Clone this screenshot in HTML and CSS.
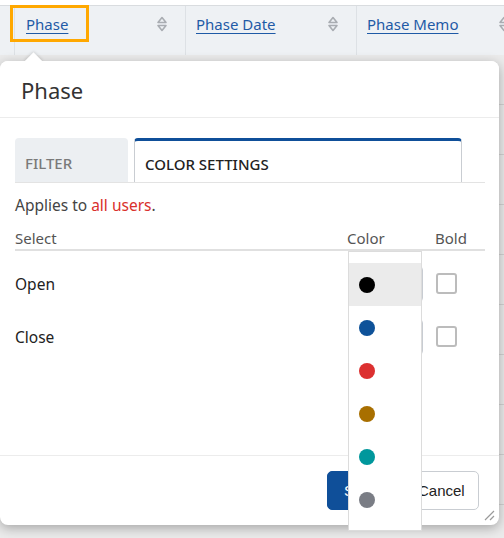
FILE: index.html
```html
<!DOCTYPE html>
<html lang="en">
<head>
<meta charset="utf-8">
<title>Phase column settings</title>
<link rel="stylesheet" href="styles.css">
</head>
<body>
<div class="page">
  <div class="thead">
    <div class="th th-narrow"></div>
    <div class="th"><a class="th-link is-focused" href="#">Phase</a><svg class="sort" viewBox="0 0 12 16" width="12" height="16"><path d="M2 6.5 L6 1.5 L10 6.5 Z M2 9.5 L6 14.5 L10 9.5 Z" fill="none" stroke="#a9adb2" stroke-width="1.6" stroke-linejoin="round"/></svg></div>
    <div class="th"><a class="th-link" href="#">Phase Date</a><svg class="sort" viewBox="0 0 12 16" width="12" height="16"><path d="M2 6.5 L6 1.5 L10 6.5 Z M2 9.5 L6 14.5 L10 9.5 Z" fill="none" stroke="#a9adb2" stroke-width="1.6" stroke-linejoin="round"/></svg></div>
    <div class="th"><a class="th-link" href="#">Phase Memo</a><svg class="sort" viewBox="0 0 12 16" width="12" height="16"><path d="M2 6.5 L6 1.5 L10 6.5 Z M2 9.5 L6 14.5 L10 9.5 Z" fill="none" stroke="#a9adb2" stroke-width="1.6" stroke-linejoin="round"/></svg></div>
  </div>
  <div class="tbody">
    <div class="tr"></div><div class="tr"></div><div class="tr"></div><div class="tr"></div><div class="tr"></div>
    <div class="tr"></div><div class="tr"></div><div class="tr"></div><div class="tr"></div><div class="tr"></div>
  </div>

  <div class="popover">
    <div class="pop-arrow"></div>
    <div class="pop-head"><h2 class="pop-title">Phase</h2></div>
    <div class="pop-body">
      <div class="tabs">
        <div class="tab">FILTER</div>
        <div class="tab tab-active">COLOR SETTINGS</div>
      </div>
      <p class="applies">Applies to <span class="hl">all users</span>.</p>
      <div class="ctable">
        <div class="crow chead">
          <div class="c-select">Select</div>
          <div class="c-color">Color</div>
          <div class="c-bold">Bold</div>
        </div>
        <div class="crows">
          <div class="crow">
            <div class="c-select">Open</div>
            <div class="c-color"><div class="selbox"></div></div>
            <div class="c-bold"><span class="check"></span></div>
          </div>
          <div class="crow">
            <div class="c-select">Close</div>
            <div class="c-color"><div class="selbox"></div></div>
            <div class="c-bold"><span class="check"></span></div>
          </div>
        </div>
      </div>
    </div>
    <div class="pop-foot">
      <button class="btn btn-primary">Save</button>
      <button class="btn btn-default">Cancel</button>
    </div>
    <svg class="grip" viewBox="0 0 12 12" width="12" height="12"><path d="M11 2 L2 11 M11 7 L7 11" stroke="#9a9a9a" stroke-width="1.2" fill="none"/></svg>
  </div>

  <ul class="color-menu">
    <li class="opt is-active"><span class="dot dot-black"></span></li>
    <li class="opt"><span class="dot dot-blue"></span></li>
    <li class="opt"><span class="dot dot-red"></span></li>
    <li class="opt"><span class="dot dot-brown"></span></li>
    <li class="opt"><span class="dot dot-teal"></span></li>
    <li class="opt"><span class="dot dot-gray"></span></li>
  </ul>
</div>
</body>
</html>
```

FILE: styles.css
```css
* { box-sizing: border-box; }
html, body { margin: 0; padding: 0; }
body {
  font-family: "Noto Sans", "Open Sans", sans-serif;
  color: #222;
  background: #ebebeb;
  overflow: hidden;
}
.page {
  position: relative;
  width: 504px;
  height: 538px;
  padding-top: 5px;
  background: #fff;
}
.thead {
  display: flex;
  height: 50px;
  border-top: 1px solid #d9dcdf;
  background: #eef1f4;
  white-space: nowrap;
}
.th {
  flex: 0 0 171px;
  display: flex;
  align-items: flex-start;
  padding: 8px 17px 0 10px;
  border-right: 1px solid #dde1e5;
}
.th-narrow { flex: 0 0 15px; padding: 0; }
.th:nth-child(2) { padding-left: 11px; }
.th-link {
  display: inline-block;
  font-size: 15px;
  line-height: 20px;
  color: #1f5aa6;
  text-decoration: underline;
  text-underline-offset: 3px;
}
.th-link.is-focused {
  padding: 6px 18px 5px 13px;
  margin: -6px -18px -5px -13px;
  outline: 3px solid #ffa800;
}
.sort { margin-left: auto; margin-top: 2px; flex: none; }

.tbody { background: #ebebeb; }
.tr { height: 50px; border-bottom: 1px solid #d3d3d3; }

.popover {
  position: absolute;
  left: 0;
  top: 61px;
  width: 499px;
  height: 464px;
  background: #fff;
  border-radius: 8px;
  box-shadow: 0 3px 12px rgba(0, 0, 0, 0.3);
  display: flex;
  flex-direction: column;
}
.pop-arrow {
  position: absolute;
  left: 27px;
  top: -6px;
  width: 13px;
  height: 13px;
  background: #fff;
  transform: rotate(45deg);
  box-shadow: -1px -1px 3px rgba(0, 0, 0, 0.12);
}
.pop-head {
  position: relative;
  height: 57px;
  background: #fff;
  border-radius: 8px 8px 0 0;
  border-bottom: 1px solid #ececec;
  padding: 0 21px;
  display: flex;
  align-items: center;
}
.pop-title {
  margin: 2px 0 0;
  font-size: 22px;
  font-weight: 400;
  color: #333;
}
.pop-body {
  flex: 1;
  padding: 20px 14px 0 15px;
}
.tabs {
  display: flex;
  gap: 6px;
  height: 45px;
  border-bottom: 1px solid #e3e3e3;
}
.tab {
  width: 113px;
  padding: 6px 0 0 10px;
  line-height: 38px;
  font-size: 15px;
  font-weight: 500;
  color: #7a7a7a;
  background: #eceff2;
  border-radius: 4px 4px 0 0;
}
.tab-active {
  width: 328px;
  color: #222;
  background: #fff;
  border: 1px solid #c9cdd2;
  border-top: 3px solid #0f4f99;
  border-bottom: 0;
  padding-top: 4px;
}
.applies {
  margin: 12px 0 0;
  font-size: 15.5px;
  line-height: 20px;
  color: #444;
}
.hl { color: #d9302c; }

.ctable { margin-top: 13px; }
.crow {
  display: flex;
  align-items: center;
  height: 53px;
  font-size: 15.5px;
}
.chead {
  height: 23px;
  align-items: flex-start;
  line-height: 20px;
  font-size: 15px;
  color: #555;
  border-bottom: 2px solid #e0e0e0;
}
.crows { padding-top: 6px; }
.c-select { flex: 1; }
.c-color { flex: 0 0 88px; }
.c-bold { flex: 0 0 50px; }
.selbox {
  width: 75px;
  height: 36px;
  margin-left: 1px;
  border: 1px solid #c8ccd2;
  border-radius: 4px;
}
.check {
  display: block;
  margin-left: 1px;
  width: 21px;
  height: 21px;
  border: 2px solid #bcbcbc;
  border-radius: 3px;
  background: #fff;
}

.pop-foot {
  height: 70px;
  border-top: 1px solid #ececec;
  display: flex;
  justify-content: flex-end;
  align-items: center;
  gap: 8px;
  padding: 0 20px 0 0;
}
.btn {
  height: 39px;
  border-radius: 5px;
  font-family: "Liberation Sans", Arial, sans-serif;
  font-size: 15px;
  padding: 0 15px;
}
.btn-primary {
  width: 68px;
  background: #0f4f99;
  color: #fff;
  border: 1px solid #0f4f99;
}
.btn-default {
  width: 76px;
  padding: 0 10px 0 14px;
  background: #fff;
  color: #222;
  border: 1px solid #c9cdd2;
  text-align: left;
}
.grip { position: absolute; right: 4px; bottom: 4px; }

.color-menu {
  position: absolute;
  left: 348px;
  top: 251px;
  width: 74px;
  margin: 0;
  padding: 11px 0 9px;
  list-style: none;
  background: #fff;
  border: 1px solid #dcdcdc;
}
.opt {
  height: 43px;
  display: flex;
  align-items: center;
  padding-left: 10px;
}
.opt.is-active { background: #ebebeb; }
.dot {
  width: 16px;
  height: 16px;
  border-radius: 50%;
}
.dot-black { background: #000; }
.dot-blue { background: #0e5299; }
.dot-red { background: #dc3030; }
.dot-brown { background: #a86f00; }
.dot-teal { background: #00979c; }
.dot-gray { background: #7a7d85; }
```
